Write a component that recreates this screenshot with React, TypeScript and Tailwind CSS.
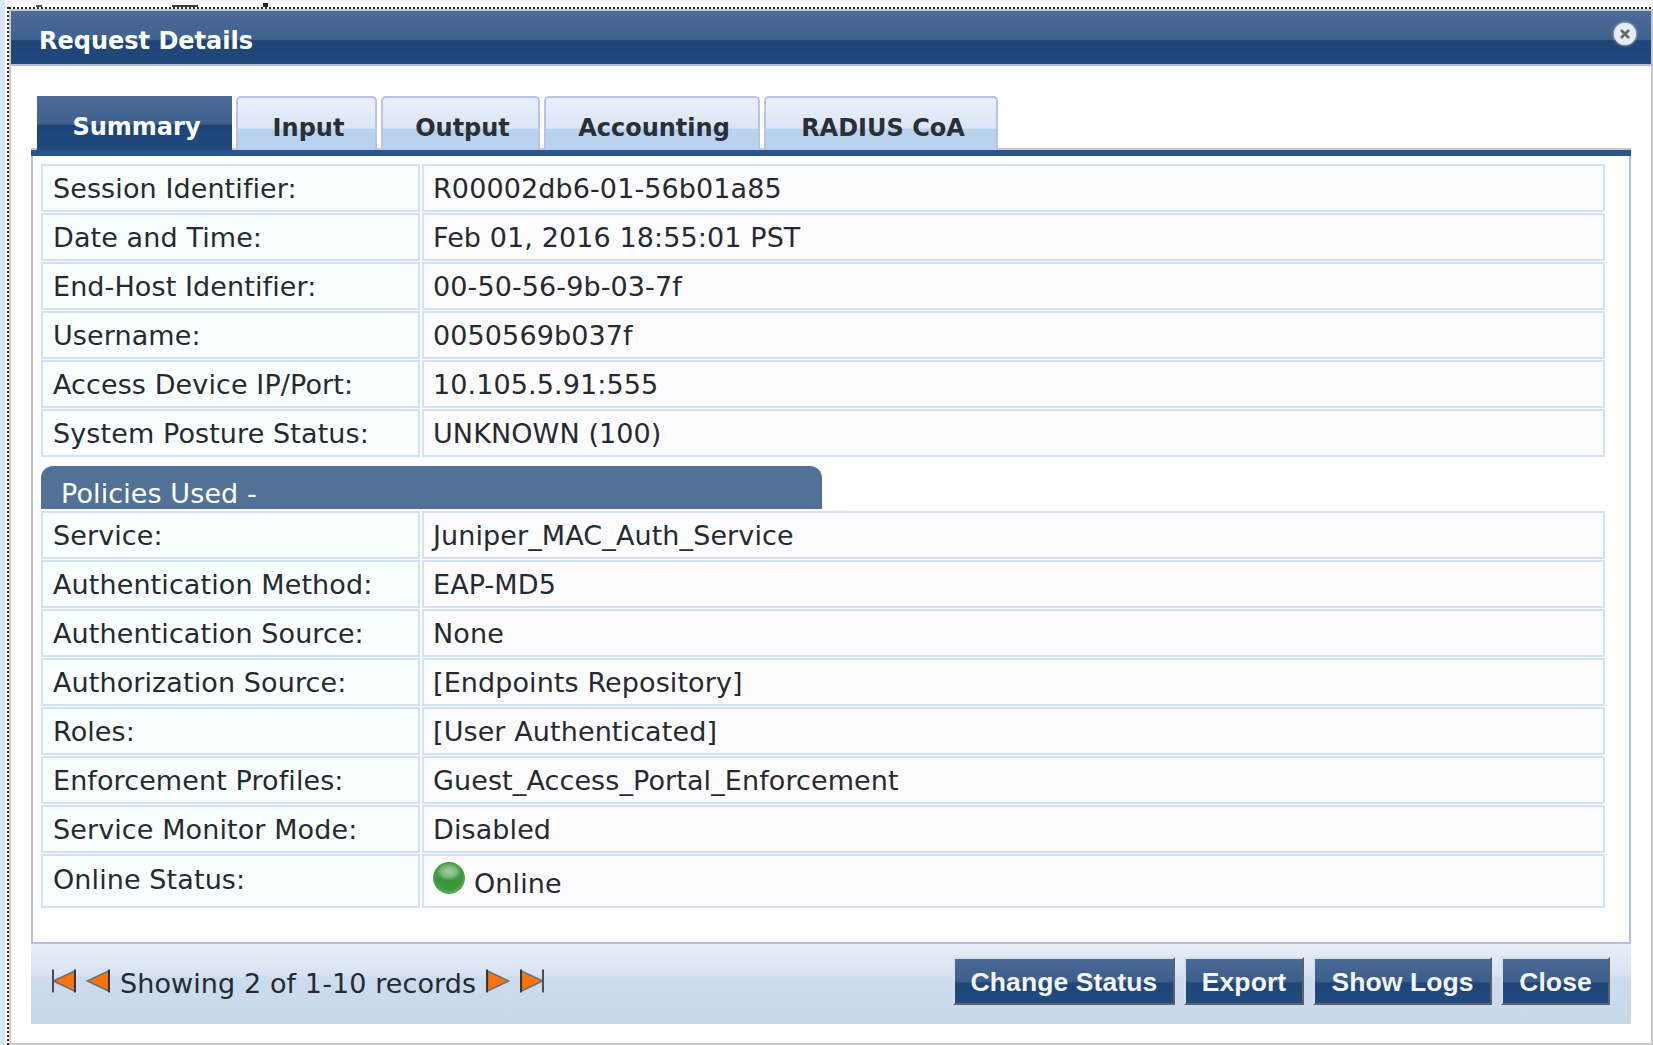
const topRows = [
  ["Session Identifier:", "R00002db6-01-56b01a85"],
  ["Date and Time:", "Feb 01, 2016 18:55:01 PST"],
  ["End-Host Identifier:", "00-50-56-9b-03-7f"],
  ["Username:", "0050569b037f"],
  ["Access Device IP/Port:", "10.105.5.91:555"],
  ["System Posture Status:", "UNKNOWN (100)"],
];

const policyRows = [
  ["Service:", "Juniper_MAC_Auth_Service"],
  ["Authentication Method:", "EAP-MD5"],
  ["Authentication Source:", "None"],
  ["Authorization Source:", "[Endpoints Repository]"],
  ["Roles:", "[User Authenticated]"],
  ["Enforcement Profiles:", "Guest_Access_Portal_Enforcement"],
  ["Service Monitor Mode:", "Disabled"],
];

const tabs = [
  { label: "Input", width: "w-[141px]" },
  { label: "Output", width: "w-[159px]" },
  { label: "Accounting", width: "w-[216px]" },
  { label: "RADIUS CoA", width: "w-[234px]" },
];

function Row({ label, value }: { label: string; value: string }) {
  return (
    <div className="grid h-[47px] grid-cols-[379px_1183px] gap-x-[2px]">
      <div className="flex items-center border-2 border-[#d2e0fb] bg-[#f9ffff] pl-[10px] pt-[3px]">{label}</div>
      <div className="flex items-center border-2 border-[#d2e0fb] bg-[#fcfcff] pl-[9px] pt-[3px]">{value}</div>
    </div>
  );
}

function Arrow({ dir, bar }: { dir: "left" | "right"; bar?: boolean }) {
  return (
    <svg width="24" height="24" viewBox="0 0 24 24" className={dir === "right" ? "mb-[7px] -scale-x-100" : "mb-[7px]"}>
      <path d="M22.5 2V22L1.5 12Z" fill="#fb7405" stroke="#6a7078" strokeWidth="1.6" />
      <rect x="22" y="0.5" width="2" height="23" fill="#33363b" />
      {bar && <rect x="0" y="0.5" width="2" height="23" fill="#4a4e55" />}
    </svg>
  );
}

function ActionButton({ label, width }: { label: string; width: string }) {
  return (
    <button className={`h-[48px] ${width} border-2 border-t-[#d8dee8] border-l-[#d8dee8] border-r-[#5c6068] border-b-[#5c6068] bg-[linear-gradient(#4a6a97,#3c5e8b_52%,#1f4577_54%,#224a7e)] pt-[4px] text-[26.5px] font-bold text-[#f4f4f4] [font-family:'Liberation_Sans',Arial,sans-serif]`}>
      {label}
    </button>
  );
}

export default function App() {
  return (
    <div className="flex h-[1045px] w-[1653px] overflow-hidden bg-white text-[27px] tracking-[0.1px] text-[#262a30] [font-family:'DejaVu_Sans',Verdana,sans-serif]">
      <div className="w-[5px] shrink-0 bg-[#dbe8fb]" />
      <div className="ml-[2px] mt-[7px] w-[2px] shrink-0 bg-[repeating-linear-gradient(180deg,#2a2a2a_0_2px,transparent_2px_4px)]" />
      <div className="flex min-w-0 flex-1 flex-col">
        <div className="flex h-[7px] shrink-0 items-end">
          <span className="ml-[27px] h-[2px] w-[6px] bg-[#55565a]" />
          <span className="ml-[130px] h-[2px] w-[26px] bg-[#3c3d40]" />
          <span className="ml-[65px] h-[4px] w-[5px] bg-[#2a2a2a]" />
        </div>
        <div className="h-[2px] shrink-0 bg-[repeating-linear-gradient(90deg,#2a2a2a_0_2px,transparent_2px_4px)]" />
        <div className="flex min-h-0 flex-1 flex-col border-2 border-[#c8c8c8]">
          <div className="flex h-[55px] shrink-0 items-center justify-between border-b-2 border-[#b4bfdd] bg-[linear-gradient(#4c6c9a,#3f618e_54%,#1e4476_56%,#214a7d)] pl-[28px] pr-[15px]">
            <span className="pt-[6px] text-[24px] font-bold tracking-normal text-white">Request Details</span>
            <span className="relative -top-[4px] flex h-[22px] w-[22px] items-center justify-center rounded-full bg-[#e8ecf2] shadow-[0_0_3px_#fff]">
              <svg width="12" height="12" viewBox="0 0 12 12">
                <path d="M2 2L10 10M10 2L2 10" stroke="#666" strokeWidth="2.6" />
              </svg>
            </span>
          </div>

          <div className="flex-1 px-[20px] pt-[30px]">
            <div className="relative -mb-[2px] flex gap-[4px] pl-[6px] text-[24px] font-bold tracking-normal">
              <div className="flex h-[54px] w-[195px] items-center justify-center bg-[linear-gradient(#4c6c9a,#3f618e_52%,#1e4476_54%,#214a7d)] pl-[4px] pt-[8px] text-white">
                Summary
              </div>
              {tabs.map((t) => (
                <div
                  key={t.label}
                  className={`flex h-[54px] ${t.width} items-center justify-center rounded-t-[5px] border-2 border-b-0 border-[#bcc3e2] bg-[linear-gradient(#eaeffb,#dce6f7_58%,#b9d3ef_60%,#b9d3ef)] pl-[4px] pt-[8px] text-[#2b2f36]`}
                >
                  {t.label}
                </div>
              ))}
            </div>

            <div className="h-[8px] border-t-2 border-[#c9c9c9] bg-[#28578f]" />

            <div className="flex h-[788px] flex-col border-x-2 border-b-2 border-[#b4bfdd] pl-[8px] pt-[8px]">
              <div className="flex flex-col gap-[2px]">
                {topRows.map(([label, value]) => (
                  <Row key={label} label={label} value={value} />
                ))}
              </div>

              <div className="mb-[2px] mt-[10px] flex h-[43px] w-[781px] items-end rounded-t-[12px] bg-[#527197] pl-[20px] leading-[30px] text-white">
                Policies Used -
              </div>

              <div className="flex flex-col gap-[2px]">
                {policyRows.map(([label, value]) => (
                  <Row key={label} label={label} value={value} />
                ))}
                <div className="grid h-[54px] grid-cols-[379px_1183px] gap-x-[2px]">
                  <div className="flex items-center border-2 border-[#d2e0fb] bg-[#f9ffff] pb-[2px] pl-[10px]">Online Status:</div>
                  <div className="flex items-center gap-[9px] border-2 border-[#d2e0fb] bg-[#fcfcff] pl-[9px]">
                    <span className="mb-[6px] h-[32px] w-[32px] rounded-full bg-[radial-gradient(ellipse_40%_28%_at_50%_30%,#a3cba0_0%,#7eb87b_60%,transparent_100%),radial-gradient(circle_at_50%_45%,#38903a_0%,#3d983c_55%,#6fba6d_82%,#d3e9d2_100%)]" />
                    <span className="pt-[7px]">Online</span>
                  </div>
                </div>
              </div>
            </div>

            <div className="flex h-[80px] items-center justify-between bg-[linear-gradient(#e9eef9,#d9e3f4_38%,#ccdcee_42%,#c9d8e9)] pl-[21px] pr-[21px]">
              <div className="flex items-center gap-[10px]">
                <Arrow dir="left" bar />
                <Arrow dir="left" />
                <span>Showing 2 of 1-10 records</span>
                <Arrow dir="right" />
                <Arrow dir="right" bar />
              </div>
              <div className="mb-[6px] flex gap-[9px]">
                <ActionButton label="Change Status" width="w-[222px]" />
                <ActionButton label="Export" width="w-[120px]" />
                <ActionButton label="Show Logs" width="w-[179px]" />
                <ActionButton label="Close" width="w-[109px]" />
              </div>
            </div>
          </div>
        </div>
      </div>
    </div>
  );
}
